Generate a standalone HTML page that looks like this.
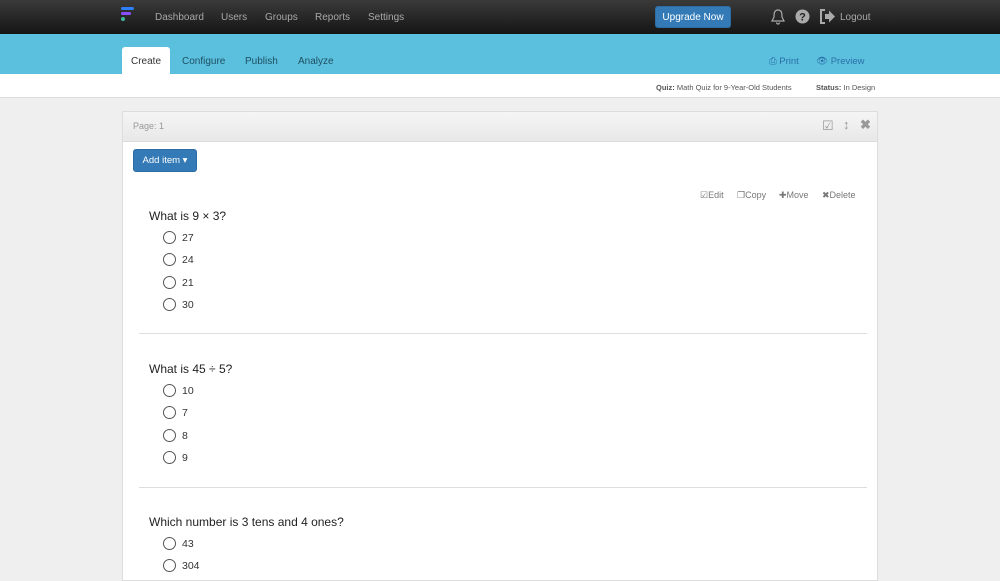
<!DOCTYPE html>
<html><head><meta charset="utf-8"><style>
*{box-sizing:border-box;margin:0;padding:0}
body{width:1000px;height:566px;overflow:hidden;background:#efefef;font-family:"Liberation Sans",Arial,sans-serif;position:relative}
.top{position:absolute;left:0;top:0;width:1000px;height:34px;background:linear-gradient(#3a3a3a,#151515)}
.top .n{position:absolute;top:12px;font-size:10px;color:#a8a8a8}
.up{position:absolute;left:655px;top:6px;width:76px;height:22px;background:#337ab7;border:1px solid #2e6da4;border-radius:3px;color:#fff;font-size:10px;text-align:center;line-height:22px}
.band{position:absolute;left:0;top:34px;width:1000px;height:40px;background:#5bc0de}
.tab{position:absolute;top:56px;font-size:10px;color:#1f4f63}
.act{position:absolute;left:122px;top:47px;width:48px;height:27px;background:#fff;border-radius:3px 3px 0 0;font-size:10px;color:#333;text-align:center;line-height:29px}
.strip{position:absolute;left:0;top:74px;width:1000px;height:24px;background:#fff;border-bottom:1px solid #ddd;font-size:7.5px;color:#555}
.panel{position:absolute;left:122px;top:111px;width:756px;height:470px;background:#fff;border:1px solid #ddd}
.ph{height:30px;background:linear-gradient(#f5f5f5,#e8e8e8);border-bottom:1px solid #ddd;font-size:9px;color:#999;padding:9px 0 0 10px}
.add{position:absolute;left:10px;top:37px;width:64px;height:23px;background:#337ab7;border:1px solid #2e6da4;border-radius:3px;color:#fff;font-size:9.5px;line-height:22px;text-align:center}
.q{position:absolute;left:26px;font-size:12px;color:#222}
.o{position:absolute;left:40px;font-size:10.5px;color:#333}
.o i{position:absolute;left:0;top:-1px;width:13px;height:13px;border:1.2px solid #555;border-radius:50%}
.o span{position:absolute;left:19px;top:0}
.hr{position:absolute;left:16px;width:728px;height:1px;background:#ddd}
.act2{position:absolute;top:78px;font-size:9px;color:#777}
</style></head><body>
<div class="top">
<svg style="position:absolute;left:121px;top:7px" width="14" height="17"><rect x="0" y="0" width="13" height="3" rx="1.5" fill="#2d7ff9"/><rect x="0" y="5" width="10" height="3" rx="1.5" fill="#8a4dff"/><circle cx="2" cy="12" r="2" fill="#3cb89a"/></svg>
<span class="n" style="left:155px">Dashboard</span><span class="n" style="left:221px">Users</span><span class="n" style="left:265px">Groups</span><span class="n" style="left:315px">Reports</span><span class="n" style="left:368px">Settings</span>
<div class="up">Upgrade Now</div>
<svg style="position:absolute;left:771px;top:9px" width="14" height="16"><path d="M7 1 C3 1 3 5 3 8 L1 12 H13 L11 8 C11 5 11 1 7 1Z M5.5 13.5 A1.5 1.5 0 0 0 8.5 13.5" fill="none" stroke="#aaa" stroke-width="1.2"/></svg>
<svg style="position:absolute;left:795px;top:9px" width="15" height="15"><circle cx="7.5" cy="7.5" r="7" fill="#aaa"/><text x="7.5" y="11.5" font-size="11" font-weight="bold" text-anchor="middle" fill="#222" font-family="Liberation Sans">?</text></svg>
<svg style="position:absolute;left:819px;top:9px" width="17" height="15"><path d="M6 1 H2 V14 H6" fill="none" stroke="#aaa" stroke-width="2"/><path d="M6 5 H10 V1.5 L16 7.5 L10 13.5 V10 H6Z" fill="#aaa"/></svg>
<span class="n" style="left:840px">Logout</span>
</div>
<div class="band"></div>
<div class="act">Create</div>
<span class="tab" style="left:182px">Configure</span><span class="tab" style="left:245px">Publish</span><span class="tab" style="left:298px">Analyze</span>
<span class="tab" style="left:769px;color:#2a6fa8;font-size:9.5px">&#9113; Print</span><span class="tab" style="left:816px;color:#2a6fa8;font-size:9.5px">&#128065;&#xFE0E; Preview</span>
<div class="strip"><span style="position:absolute;left:656px;top:9px"><b>Quiz:</b> Math Quiz for 9-Year-Old Students</span><span style="position:absolute;left:816px;top:9px"><b>Status:</b> In Design</span></div>
<div class="panel">
<div class="ph">Page: 1</div>
<span style="position:absolute;left:699px;top:6px;color:#999;font-size:13px">&#9745;&#xFE0E;</span><span style="position:absolute;left:720px;top:5px;color:#999;font-size:13px;font-weight:bold">&#8597;</span><span style="position:absolute;left:737px;top:5px;color:#999;font-size:13px;font-weight:bold">&#10006;</span>
<div class="add">Add item &#9662;</div>
<span class="act2" style="left:577px">&#9745;&#xFE0E;Edit</span><span class="act2" style="left:614px">&#10064;Copy</span><span class="act2" style="left:656px">&#10010;Move</span><span class="act2" style="left:699px">&#10006;Delete</span>
<div class="q" style="top:97px">What is 9 × 3?</div>
<div class="o" style="top:120px"><i></i><span>27</span></div>
<div class="o" style="top:142px"><i></i><span>24</span></div>
<div class="o" style="top:165px"><i></i><span>21</span></div>
<div class="o" style="top:187px"><i></i><span>30</span></div>
<div class="hr" style="top:221px"></div>
<div class="q" style="top:250px">What is 45 ÷ 5?</div>
<div class="o" style="top:273px"><i></i><span>10</span></div>
<div class="o" style="top:295px"><i></i><span>7</span></div>
<div class="o" style="top:318px"><i></i><span>8</span></div>
<div class="o" style="top:340px"><i></i><span>9</span></div>
<div class="hr" style="top:375px"></div>
<div class="q" style="top:403px">Which number is 3 tens and 4 ones?</div>
<div class="o" style="top:426px"><i></i><span>43</span></div>
<div class="o" style="top:448px"><i></i><span>304</span></div>
</div>
</body></html>
